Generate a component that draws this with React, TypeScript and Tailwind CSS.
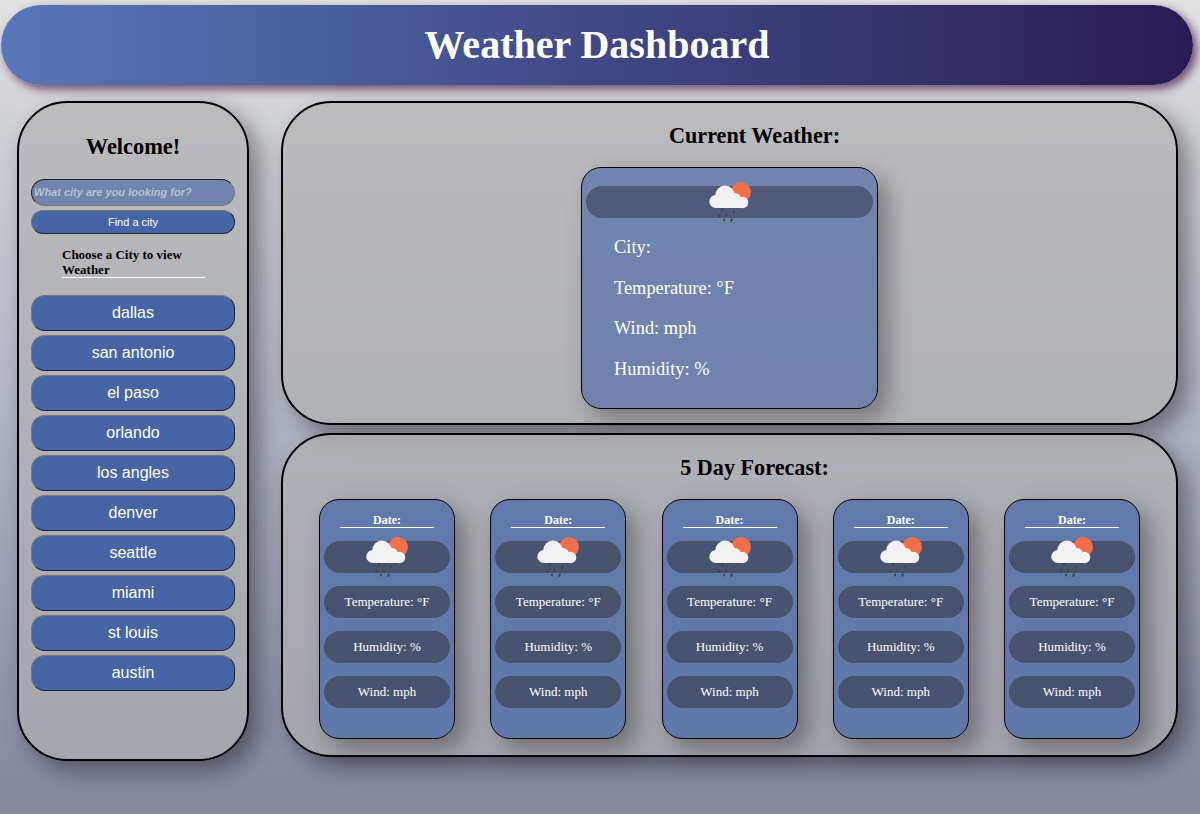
const cities = [
  "dallas",
  "san antonio",
  "el paso",
  "orlando",
  "los angles",
  "denver",
  "seattle",
  "miami",
  "st louis",
  "austin",
];

function WeatherIcon() {
  return (
    <svg width="50" height="50" viewBox="0 0 50 50" className="shrink-0">
      <circle cx="36" cy="15" r="10" fill="#f1704a" />
      <g fill="#f2f2f2">
        <circle cx="10.800" cy="24.500" r="6.500" />
        <circle cx="20" cy="18.300" r="9.700" />
        <circle cx="30" cy="22" r="6" />
        <circle cx="37.500" cy="25.500" r="5.800" />
        <rect x="11" y="22" width="26" height="9" />
      </g>
      <g stroke="#454545" strokeWidth="2" strokeLinecap="round">
        <path d="M17.200 32 16.900 33.300" />
        <path d="M14.700 38.200 14.100 39.600" />
        <path d="M21.300 37.500 20.800 39" />
        <path d="M29.200 34.600 29 35.400" />
        <path d="M26.800 42.300 26.200 43.800" />
        <path d="M19.100 42.600 19 43.400" />
      </g>
    </svg>
  );
}

function ForecastCard() {
  return (
    <div className="h-[240px] w-[136px] rounded-[20px] border border-black bg-[#4a68a8]/75 px-1 font-['Liberation_Serif',serif] text-[13px] text-white shadow-[10px_10px_25px_rgba(0,0,0,0.35)]">
      <h4 className="mx-auto mt-[14px] w-[94px] border-b border-white text-center text-[12px] leading-[13px] font-bold">
        Date:
      </h4>
      <div className="mt-[13px] flex h-8 items-center justify-center rounded-full bg-[#47536f]">
        <WeatherIcon />
      </div>
      <p className="mt-[13px] flex h-8 items-center justify-center rounded-full bg-[#47536f]">
        Temperature: °F
      </p>
      <p className="mt-[13px] flex h-8 items-center justify-center rounded-full bg-[#47536f]">
        Humidity: %
      </p>
      <p className="mt-[13px] flex h-8 items-center justify-center rounded-full bg-[#47536f]">
        Wind: mph
      </p>
    </div>
  );
}

export default function App() {
  return (
    <div className="h-[814px] overflow-hidden bg-[linear-gradient(180deg,#e2e2e2_0%,#d0d1d5_15%,#b2b5c3_50%,#8a8da5_92%,#84879f_100%)] pt-[5px] font-['Liberation_Serif',serif]">
      {/* Header */}
      <header className="ml-px flex h-20 w-[1192px] items-center justify-center rounded-[40px] bg-[linear-gradient(90deg,#5677b7,#2a1b54)] shadow-[4px_4px_10px_rgba(90,50,90,0.85)]">
        <h1 className="text-[40px] font-bold text-white">Weather Dashboard</h1>
      </header>

      <div className="mt-4 ml-[17px] flex items-start gap-8">
        {/* Sidebar */}
        <aside className="h-[660px] w-[232px] rounded-[50px] border-2 border-black bg-[#b0b0b0]/70 px-3 shadow-[10px_10px_25px_rgba(0,0,0,0.4)]">
          <h2 className="mt-[30px] text-center text-[22.4px] leading-[28px] font-bold text-black">
            Welcome!
          </h2>
          <input
            placeholder="What city are you looking for?"
            className="mt-[18px] block h-[27px] w-[204px] rounded-[14px] border border-[#222] border-r-[#777] border-b-[#777] bg-[#4a68a8]/65 px-[2px] pb-[2px] font-['Liberation_Sans',sans-serif] text-[11px] font-bold italic outline-none placeholder:text-[#b9c1d6]"
          />
          <button className="mt-[4px] block h-6 w-[204px] rounded-[14px] border border-[#222] border-t-[#777] border-l-[#777] bg-[#4665a5] font-['Liberation_Sans',sans-serif] text-[11px] text-white">
            Find a city
          </button>
          <h3 className="mt-[13px] ml-[31px] w-[143px] border-b border-white text-[13px] leading-[15px] font-bold text-black">
            Choose a City to view Weather
          </h3>
          <div className="mt-[17px] flex flex-col gap-1">
            {cities.map((city) => (
              <button
                key={city}
                className="h-9 w-[204px] rounded-[14px] border border-[#222] border-t-[#777] border-l-[#777] bg-[#4665a5] font-['Liberation_Sans',sans-serif] text-[16px] text-white"
              >
                {city}
              </button>
            ))}
          </div>
        </aside>

        <main className="flex w-[897px] flex-col gap-2">
          {/* Current weather */}
          <section className="h-[324px] rounded-[50px] border-2 border-black bg-[#b0b0b0]/70 shadow-[10px_10px_25px_rgba(0,0,0,0.4)]">
            <h2 className="pt-[19px] pl-[50px] text-center text-[22.2px] leading-[28px] font-bold text-black">
              Current Weather:
            </h2>
            <div className="mx-auto mt-[17px] h-[242px] w-[297px] rounded-[20px] border border-black bg-[#4a68a8]/65 px-1 pt-[18px] text-[18.4px] text-white shadow-[10px_10px_25px_rgba(0,0,0,0.35)]">
              <div className="flex h-8 items-center justify-center rounded-full bg-[#4f5a78]">
                <WeatherIcon />
              </div>
              <div className="mt-[19px] flex flex-col gap-[20px] pl-[28px] leading-[20.5px]">
                <p>City:</p>
                <p>Temperature: °F</p>
                <p>Wind: mph</p>
                <p>Humidity: %</p>
              </div>
            </div>
          </section>

          {/* 5 day forecast */}
          <section className="h-[324px] rounded-[50px] border-2 border-black bg-[#b0b0b0]/70 shadow-[10px_10px_25px_rgba(0,0,0,0.4)]">
            <h2 className="pt-[19px] pl-[50px] text-center text-[22.2px] leading-[28px] font-bold text-black">
              5 Day Forecast:
            </h2>
            <div className="mt-[17px] flex justify-between px-9">
              {[1, 2, 3, 4, 5].map((n) => (
                <ForecastCard key={n} />
              ))}
            </div>
          </section>
        </main>
      </div>
    </div>
  );
}
